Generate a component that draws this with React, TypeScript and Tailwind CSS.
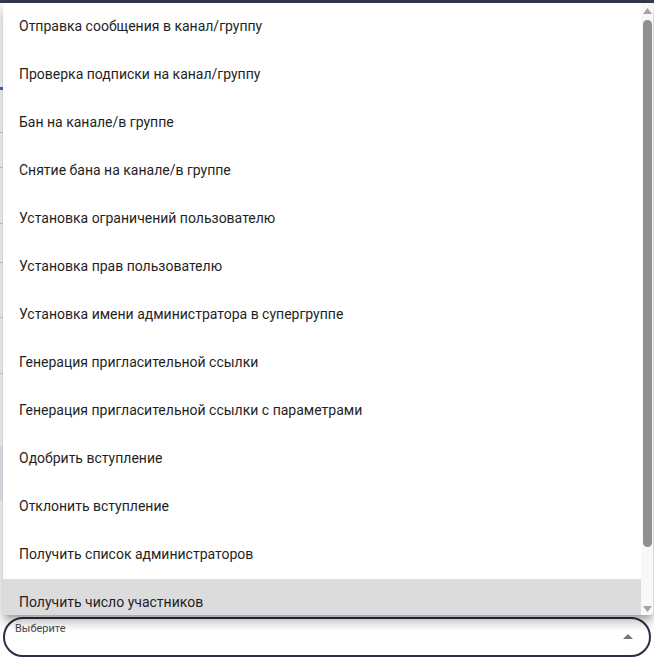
import React from "react";

const items = [
  "Отправка сообщения в канал/группу",
  "Проверка подписки на канал/группу",
  "Бан на канале/в группе",
  "Снятие бана на канале/в группе",
  "Установка ограничений пользователю",
  "Установка прав пользователю",
  "Установка имени администратора в супергруппе",
  "Генерация пригласительной ссылки",
  "Генерация пригласительной ссылки с параметрами",
  "Одобрить вступление",
  "Отклонить вступление",
  "Получить список администраторов",
  "Получить число участников",
];

export default function App() {
  return (
    <div className="relative flex h-[659px] w-[654px] flex-col overflow-hidden bg-white font-['Roboto',sans-serif]">
      {/* page behind the menu */}
      <div className="h-[3px] bg-[#353a50]" />
      <div className="flex-1">
        <div className="mt-[84px] h-[3px] w-[3px] bg-[#3b6fd0]" />
        <div className="mt-[42px] h-px w-[3px] bg-[#d6d6d6]" />
        <div className="mt-[34px] h-px w-[3px] bg-[#d6d6d6]" />
        <div className="mt-[55px] h-px w-[3px] bg-[#d6d6d6]" />
        <div className="mt-[38px] h-px w-[3px] bg-[#d6d6d6]" />
        <div className="mt-[54px] h-px w-[3px] bg-[#d6d6d6]" />
        <div className="mt-[55px] h-px w-[3px] bg-[#d6d6d6]" />
        <div className="mt-[72px] h-[55px] w-[3px] bg-[#eef0f8]" />
      </div>

      {/* select field */}
      <div className="relative mx-[3px] mb-[2px] h-[40px] rounded-[20px] border-2 border-[#2b2e46] bg-white">
        <span className="absolute left-[10px] top-[3px] text-[11px] leading-[14px] text-[#4a4a4a]">
          Выберите
        </span>
        <svg className="absolute right-[16px] top-[15px]" width="10" height="5" viewBox="0 0 10 5">
          <path d="M0 5 L5 0 L10 5 Z" fill="#757575" />
        </svg>
      </div>

      {/* open menu popover */}
      <div className="absolute left-[3px] top-[3px] flex h-[612px] w-[650px] overflow-hidden rounded-[4px] bg-white shadow-[0_5px_5px_-3px_rgba(0,0,0,0.2),0_8px_10px_1px_rgba(0,0,0,0.14),0_3px_14px_2px_rgba(0,0,0,0.12)]">
        <ul className="flex-1">
          {items.map((t, i) => (
            <li
              key={t}
              className={`flex h-[48px] items-center px-4 pb-[2px] text-[14px] leading-6 text-[#1f1f1f] ${
                i === items.length - 1 ? "bg-[#dcdcdc]" : ""
              }`}
            >
              {t}
            </li>
          ))}
        </ul>
        <div className="flex w-[12px] flex-col items-center bg-[#f8f8f8]">
          <svg className="mt-[5px]" width="9" height="6" viewBox="0 0 9 6">
            <path d="M0 6 L4.5 0 L9 6 Z" fill="#a3a3a3" />
          </svg>
          <div className="mt-[6px] h-[527px] w-[9px] rounded-full bg-[#8f8f8f]" />
          <div className="flex-1" />
          <svg className="mb-[3px]" width="9" height="6" viewBox="0 0 9 6">
            <path d="M0 0 L4.5 6 L9 0 Z" fill="#a3a3a3" />
          </svg>
        </div>
      </div>
    </div>
  );
}
